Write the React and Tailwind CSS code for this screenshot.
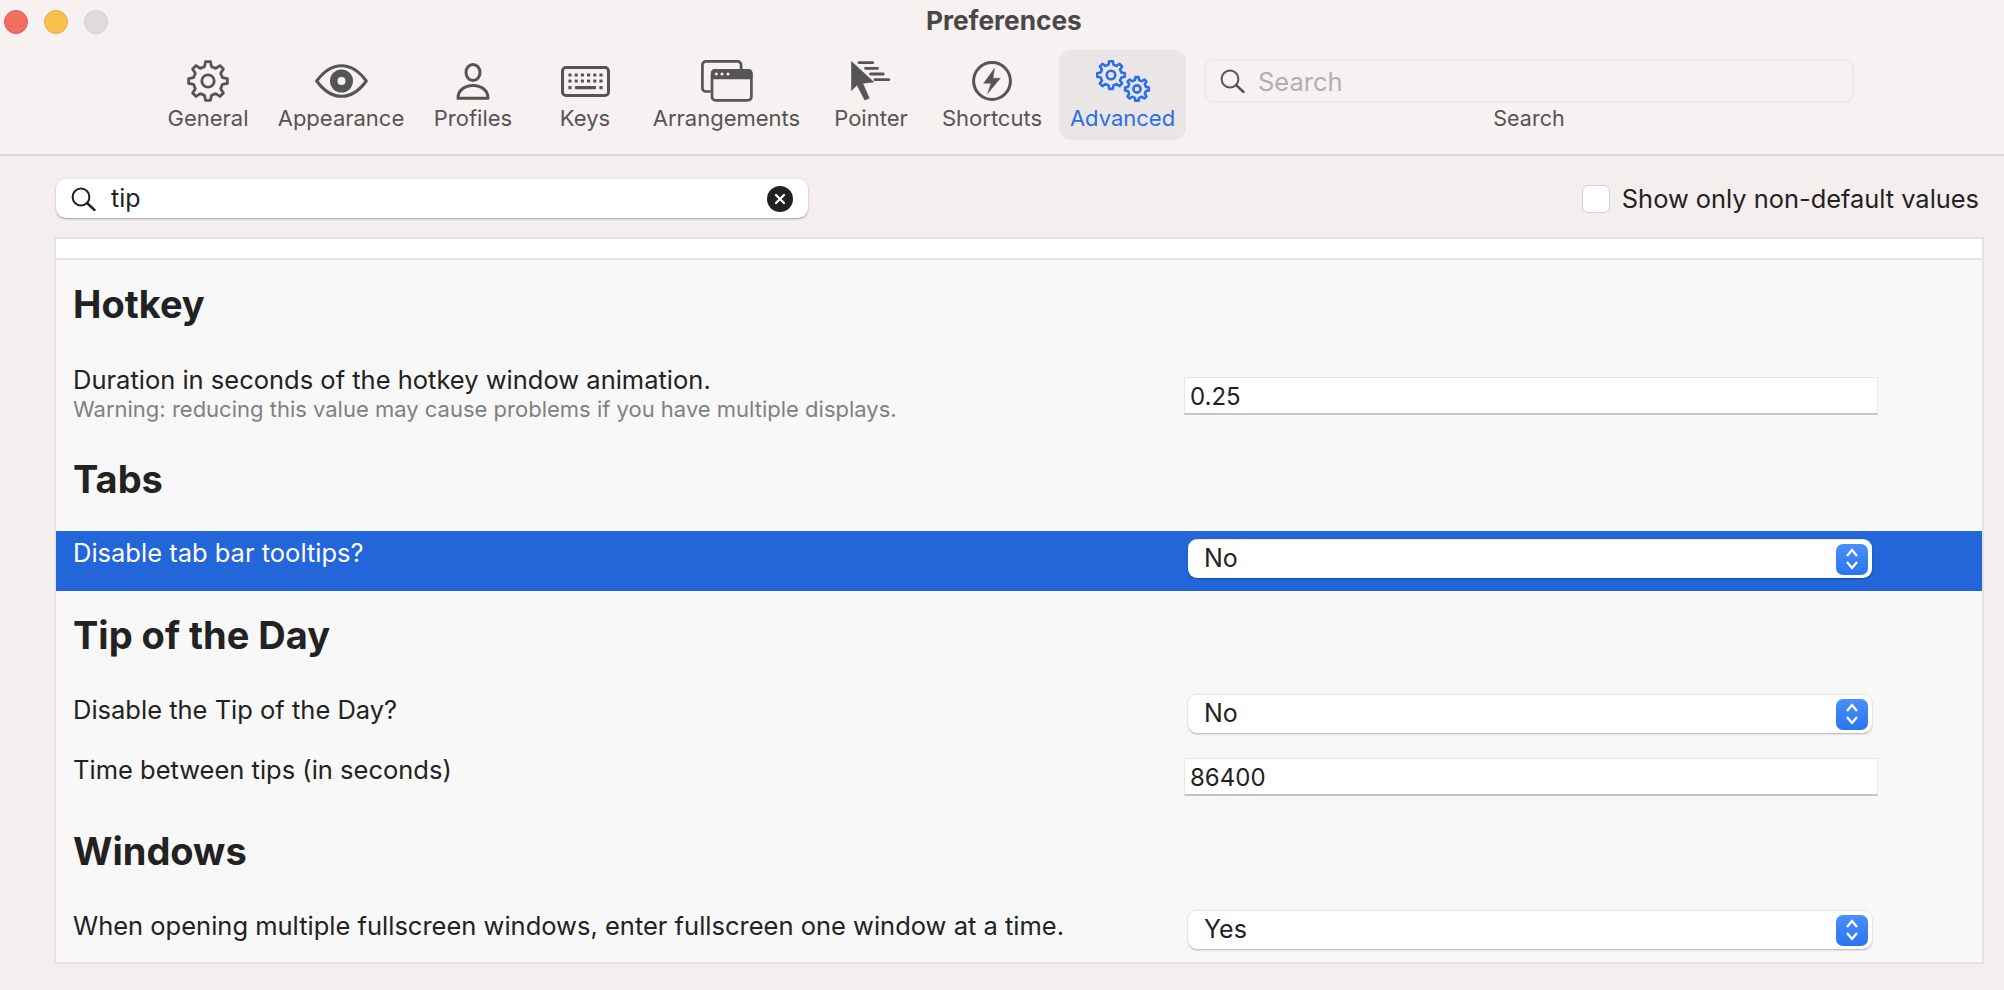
import React from "react";

const gearPath = (cx, cy, rOut, rIn, teeth = 8) => {
  const step = (Math.PI * 2) / teeth;
  let d = "";
  for (let i = 0; i < teeth; i++) {
    const a = i * step - Math.PI / 2;
    const pts = [
      [rIn, a - step * 0.3],
      [rOut, a - step * 0.16],
      [rOut, a + step * 0.16],
      [rIn, a + step * 0.3],
    ].map(([r, t]) => `${(cx + r * Math.cos(t)).toFixed(2)} ${(cy + r * Math.sin(t)).toFixed(2)}`);
    d += (i === 0 ? "M" : "L") + pts.join("L");
  }
  return d + "Z";
};

const Gear = ({ cx, cy, r, hole, color, sw = 3 }) => (
  <>
    <path d={gearPath(cx, cy, r, r * 0.76)} fill="none" stroke={color} strokeWidth={sw} strokeLinejoin="round" />
    <circle cx={cx} cy={cy} r={hole} fill="none" stroke={color} strokeWidth={sw} />
  </>
);

const GeneralIcon = () => (
  <svg width="42" height="42" viewBox="0 0 42 42">
    <Gear cx={21} cy={21} r={19.5} hole={6.2} color="#555" sw={2.8} />
  </svg>
);

const EyeIcon = () => (
  <svg width="53" height="34" viewBox="0 0 53 34">
    <path d="M1.7 17C10 5.5 18 1.7 26.5 1.7S43 5.5 51.3 17C43 28.5 35 32.3 26.5 32.3S10 28.5 1.7 17Z" fill="none" stroke="#555" strokeWidth="3" strokeLinejoin="round" />
    <circle cx="26.5" cy="17" r="11.5" fill="#555" />
    <circle cx="26.5" cy="17" r="4" fill="#f7f1f1" />
  </svg>
);

const PersonIcon = () => (
  <svg width="34" height="37" viewBox="0 0 34 37">
    <ellipse cx="17" cy="9.5" rx="7" ry="8" fill="none" stroke="#555" strokeWidth="3" />
    <path d="M2 35.2C2 27 9 22.5 17 22.5S32 27 32 35.2Z" fill="none" stroke="#555" strokeWidth="3" strokeLinejoin="round" />
  </svg>
);

const KeyboardIcon = () => (
  <svg width="49" height="31" viewBox="0 0 49 31">
    <rect x="1.5" y="1.5" width="46" height="28" rx="3.5" fill="none" stroke="#555" strokeWidth="3" />
    {[0, 1].map((row) =>
      [0, 1, 2, 3, 4, 5].map((c) => (
        <rect key={`${row}-${c}`} x={7.4 + c * 6.2} y={7.4 + row * 6} width="3.2" height="3.2" rx="0.6" fill="#555" />
      ))
    )}
    <rect x="7.4" y="20" width="3.2" height="3.2" rx="0.6" fill="#555" />
    <rect x="14" y="20" width="21" height="3.2" rx="0.6" fill="#555" />
    <rect x="38.4" y="20" width="3.2" height="3.2" rx="0.6" fill="#555" />
  </svg>
);

const WindowsIcon = () => (
  <svg width="52" height="42" viewBox="0 0 52 42">
    <path d="M9.7 31.5H5A3.6 3.6 0 0 1 1.4 27.9V5A3.6 3.6 0 0 1 5 1.4H36.5A3.6 3.6 0 0 1 40.1 5V9" fill="none" stroke="#555" strokeWidth="2.7" />
    <rect x="11" y="10.4" width="39.4" height="30" rx="3.6" fill="none" stroke="#555" strokeWidth="2.7" />
    <path d="M10 19.3V13A4 4 0 0 1 14 9H47.4A4 4 0 0 1 51.4 13V19.3Z" fill="#555" />
    <circle cx="15.3" cy="14" r="1.5" fill="#f7f1f1" />
    <circle cx="21" cy="14" r="1.5" fill="#f7f1f1" />
    <circle cx="27" cy="14" r="1.5" fill="#f7f1f1" />
  </svg>
);

const PointerIcon = () => (
  <svg width="40" height="40" viewBox="0 0 40 40">
    <path d="M0.5 0.5V29.5L6 24L13.7 39L18.3 37.3L11.7 22.3L22.7 21Z" fill="#555" stroke="#555" strokeWidth="0.6" strokeLinejoin="round" />
    <path d="M8 1.7H21.7M14.5 7.3H26.5M19.5 13H32.2M24 18.7H37.8" stroke="#555" strokeWidth="2.8" strokeLinecap="round" fill="none" />
  </svg>
);

const ShortcutsIcon = () => (
  <svg width="40" height="40" viewBox="0 0 40 40">
    <circle cx="20" cy="20" r="18.4" fill="none" stroke="#555" strokeWidth="3" />
    <path d="M22.5 7.3L11.7 22.3H19L15.7 32.5L28.3 17.3H21Z" fill="#555" stroke="#555" strokeWidth="0.5" strokeLinejoin="round" />
  </svg>
);

const AdvancedIcon = () => (
  <svg width="54" height="42" viewBox="0 0 54 42">
    <Gear cx={15} cy={15} r={14} hole={4.3} color="#2a6fe8" sw={2.6} />
    <Gear cx={41} cy={29} r={12} hole={3.6} color="#2a6fe8" sw={2.6} />
  </svg>
);

const SearchIcon = ({ color = "#333" }) => (
  <svg width="25" height="24" viewBox="0 0 25 24" className="shrink-0">
    <circle cx="10" cy="10" r="8.4" fill="none" stroke={color} strokeWidth="2" />
    <path d="M16 16L23.5 23" fill="none" stroke={color} strokeWidth="2.4" strokeLinecap="round" />
  </svg>
);

const tools = [
  { label: "General", icon: <GeneralIcon />, width: "w-[104px]" },
  { label: "Appearance", icon: <EyeIcon />, width: "w-[162px]" },
  { label: "Profiles", icon: <PersonIcon />, width: "w-[102px]" },
  { label: "Keys", icon: <KeyboardIcon />, width: "w-[122px]" },
  { label: "Arrangements", icon: <WindowsIcon />, width: "w-[161px]" },
  { label: "Pointer", icon: <PointerIcon />, width: "w-[128px]" },
  { label: "Shortcuts", icon: <ShortcutsIcon />, width: "w-[114px]" },
];

const ToolItem = ({ label, icon, width }) => (
  <div className={`${width} h-[90px] flex flex-col items-center pt-[10px]`}>
    <div className="h-[42px] flex items-center justify-center">{icon}</div>
    <div className="h-[32px] leading-[32px] text-[22px] text-[#555] whitespace-nowrap">{label}</div>
  </div>
);

const Stepper = () => (
  <div className="w-[32px] h-[31px] rounded-[7px] bg-gradient-to-b from-[#4a90f8] to-[#2a74ee] flex items-center justify-center">
    <svg width="14" height="24" viewBox="0 0 14 24">
      <path d="M2 9L7 3L12 9M2 15L7 21L12 15" fill="none" stroke="#fff" strokeWidth="2.2" />
    </svg>
  </div>
);

const Select = ({ value }) => (
  <div className="ml-[4px] w-[684px] h-[39px] bg-white rounded-[9px] border-t border-[#e8e8e8] shadow-[0_1px_2px_rgba(0,0,0,0.3)] flex items-center justify-between pl-[16px] pr-[4px] text-[25px] text-[#222]">
    <span>{value}</span>
    <Stepper />
  </div>
);

const Field = ({ value }) => (
  <div className="w-[694px] h-[38px] bg-white border border-[#e6e6e6] border-b-2 border-b-[#c4c4c4] flex items-center pl-[5px] pt-[2px] text-[24px] text-[#222]">
    {value}
  </div>
);

const Heading = ({ children, height }) => (
  <div className={`${height} pl-[17px] text-[38px] leading-[44px] font-bold text-[#222]`}>{children}</div>
);

const Row = ({ height, labelTop, fieldTop, label, note, selected, children }) => (
  <div className={`${height} flex ${selected ? "bg-[#2266d9] text-white" : "text-[#222]"}`}>
    <div className={`w-[1128px] pl-[17px] ${labelTop}`}>
      <div className="text-[25.5px] leading-[30px]">{label}</div>
      {note && <div className="text-[22px] leading-[28px] text-[#808080]">{note}</div>}
    </div>
    <div className={fieldTop}>{children}</div>
  </div>
);

export default function App() {
  return (
    <div className="w-[2004px] h-[990px] overflow-hidden bg-[#f4eeee] font-[Inter,sans-serif]">
      <header className="h-[156px] bg-[#f7f1f1] border-b-2 border-[#d9d5d5]">
        <div className="h-[50px] flex items-start">
          <div className="flex gap-[16px] pl-[4px] pt-[10px] w-[926px]">
            <span className="w-[24px] h-[24px] rounded-full bg-[#f26d62] border border-[#e05a50]" />
            <span className="w-[24px] h-[24px] rounded-full bg-[#f8c04f] border border-[#e5ab3c]" />
            <span className="w-[24px] h-[24px] rounded-full bg-[#e0dada] border border-[#d0cbcb]" />
          </div>
          <div className="text-[26.2px] leading-[42px] font-bold text-[#484848]">Preferences</div>
        </div>
        <div className="flex items-start pl-[156px]">
          {tools.map((t) => (
            <ToolItem key={t.label} {...t} />
          ))}
          <div className="ml-[10px] w-[127px] h-[90px] rounded-[12px] bg-[#ebe6e6] flex flex-col items-center pt-[10px]">
            <div className="h-[42px] flex items-center justify-center">
              <AdvancedIcon />
            </div>
            <div className="h-[32px] leading-[32px] text-[22px] text-[#2a6fe8]">Advanced</div>
          </div>
          <div className="ml-[18px] w-[650px] pt-[9px]">
            <div className="h-[44px] rounded-[9px] border-2 border-[#eee9e9] flex items-center gap-[13px] pl-[14px] text-[25.5px] text-[#b3afaf]">
              <SearchIcon color="#555" />
              <span className="pt-[3px]">Search</span>
            </div>
            <div className="h-[31px] leading-[31px] text-center text-[21.5px] text-[#555]">Search</div>
          </div>
        </div>
      </header>

      <div className="flex items-center justify-between pl-[56px] pr-[25px] pt-[22px] h-[81px] pb-[19px]">
        <div className="w-[752px] h-[40px] bg-white rounded-[10px] border-t border-[#ececec] shadow-[0_1px_2px_rgba(0,0,0,0.35)] flex items-center pl-[15px] pr-[15px] text-[25px] text-[#222]">
          <SearchIcon color="#222" />
          <span className="ml-[15px] flex-1">tip</span>
          <span className="w-[26px] h-[26px] rounded-full bg-[#222] flex items-center justify-center">
            <svg width="12" height="12" viewBox="0 0 12 12">
              <path d="M2 2L10 10M10 2L2 10" stroke="#fff" strokeWidth="2.2" strokeLinecap="round" />
            </svg>
          </span>
        </div>
        <div className="flex items-center gap-[12px] pt-[3px] text-[25.4px] text-[#222]">
          <span className="w-[28px] h-[28px] -mt-[1px] rounded-[6px] bg-white border border-[#d2d2d2]" />
          <span>Show only non-default values</span>
        </div>
      </div>

      <div className="ml-[54px] w-[1930px] h-[727px] border-2 border-[#e6e3e3] bg-[#f8f8f8] overflow-hidden">
        <div className="h-[21px] bg-white border-b-2 border-[#e4e4e4]" />
        <Heading height="h-[105px] pt-[22px]">Hotkey</Heading>
        <Row
          height="h-[78px]"
          labelTop="pt-[0px]"
          fieldTop="pt-[12px]"
          label="Duration in seconds of the hotkey window animation."
          note="Warning: reducing this value may cause problems if you have multiple displays."
        >
          <Field value="0.25" />
        </Row>
        <Heading height="h-[88px] pt-[14px]">Tabs</Heading>
        <Row height="h-[60px]" labelTop="pt-[7px]" fieldTop="pt-[8px]" label="Disable tab bar tooltips?" selected>
          <Select value="No" />
        </Row>
        <Heading height="h-[95px] pt-[22px]">Tip of the Day</Heading>
        <Row height="h-[60px]" labelTop="pt-[9px]" fieldTop="pt-[8px]" label="Disable the Tip of the Day?">
          <Select value="No" />
        </Row>
        <Row height="h-[65px]" labelTop="pt-[9px]" fieldTop="pt-[12px]" label="Time between tips (in seconds)">
          <Field value="86400" />
        </Row>
        <Heading height="h-[90px] pt-[18px]">Windows</Heading>
        <Row
          height="h-[63px]"
          labelTop="pt-[10px]"
          fieldTop="pt-[9px]"
          label="When opening multiple fullscreen windows, enter fullscreen one window at a time."
        >
          <Select value="Yes" />
        </Row>
      </div>
    </div>
  );
}
